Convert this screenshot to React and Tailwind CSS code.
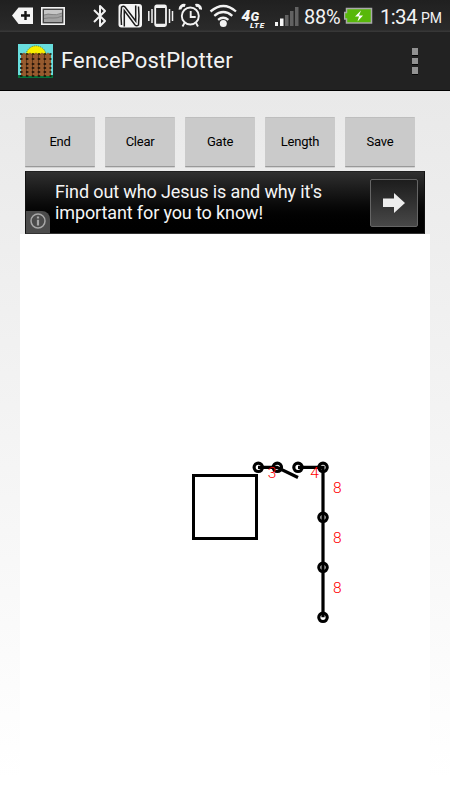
const statusIcon = "block shrink-0";

function StatusBar() {
  return (
    <div className="flex h-8 items-start overflow-hidden bg-gradient-to-b from-[#202020] via-[#2a2a2a] via-[92%] to-[#3a3a3a] pl-3 text-[#f2f2f2]">
      <svg className={statusIcon} width="22" height="32" viewBox="12 0 22 32">
        <path d="M12 15.5 18.5 7.5H33V24H18.5Z" fill="#f5f5f5" />
        <path d="M25.5 11v9M21 15.5h9" stroke="#151515" strokeWidth="2.4" />
      </svg>
      <svg className={`${statusIcon} ml-[7px]`} width="24" height="32" viewBox="41 0 24 32">
        <rect x="41.8" y="7.8" width="22.4" height="16.4" fill="#444" stroke="#f2f2f2" strokeWidth="1.6" />
        <rect x="44" y="10" width="18" height="12" fill="#a2a2a2" />
        <path d="M44 10h18v3q-6 3-10 1.500t-8 .5Z" fill="#c6c6c6" />
        <path d="M44 15q4-1.500 8-.5t10-1.500M44 18.500q5-1 9-.5t9-2" stroke="#777" strokeWidth=".8" fill="none" />
      </svg>
      <svg className={`${statusIcon} ml-7`} width="14" height="32" viewBox="93 0 14 32">
        <path d="m94 10 11 11-5 5V6l5 5L94 22" fill="none" stroke="#f2f2f2" strokeWidth="2" strokeLinejoin="round" />
      </svg>
      <svg className={`${statusIcon} ml-[11px]`} width="24" height="32" viewBox="118 0 24 32">
        <rect x="118.500" y="4" width="23.500" height="23.500" rx="3" fill="#f5f5f5" />
        <path d="M124.300 26.500V10.500L135 25q1.500 1.500 3.500 0 1-8 0-18.500" fill="none" stroke="#1b1b1b" strokeWidth="1.500" />
        <path d="M121.500 25q-1-9 0-18 2-1.500 3.500 0L135.700 21V5.500" fill="none" stroke="#1b1b1b" strokeWidth="1.500" />
      </svg>
      <svg className={`${statusIcon} ml-[6px]`} width="26" height="32" viewBox="148 0 26 32">
        <rect x="155.200" y="5.500" width="10.800" height="20.500" rx="1.500" fill="none" stroke="#f2f2f2" strokeWidth="1.800" />
        <path d="M156 7h9.500M156 24.700h9.500" stroke="#f2f2f2" strokeWidth="1.800" />
        <path d="M152 9v14M148.800 11v10M169.500 9v14M172.500 11v10" stroke="#f2f2f2" strokeWidth="1.500" />
      </svg>
      <svg className={`${statusIcon} ml-[4px]`} width="24" height="32" viewBox="178 0 24 32">
        <circle cx="190.300" cy="16" r="8.500" fill="none" stroke="#f2f2f2" strokeWidth="1.900" />
        <path d="M180.200 9.500a3.800 3.800 0 0 1 5-4M200.500 9.500a3.800 3.800 0 0 0-5-4" stroke="#f2f2f2" strokeWidth="3" fill="none" />
        <path d="M190.700 11v6h5M184.500 23l-2 3.500M196 23l2 3.500" stroke="#f2f2f2" strokeWidth="1.900" fill="none" />
      </svg>
      <svg className={`${statusIcon} ml-[7px]`} width="28" height="32" viewBox="209 0 28 32">
        <path d="M210.500 11.500q13-11 25.500 0M214.300 15.800q9-7.500 18 0M218.100 19.800q5-4 10.300 0" fill="none" stroke="#f2f2f2" strokeWidth="2.300" />
        <circle cx="223.300" cy="23.600" r="3.500" fill="#f2f2f2" />
      </svg>
      <svg className={`${statusIcon} ml-[4px]`} width="27" height="32" viewBox="241 0 27 32" fontFamily="Roboto, sans-serif" fontWeight="900" fontStyle="italic" fill="#f5f5f5">
        <text x="241.500" y="21" fontSize="15.500">
          4<tspan x="250.500" fontSize="13">G</tspan>
        </text>
        <text x="250" y="28" fontSize="8" letterSpacing=".7">LTE</text>
      </svg>
      <svg className={`${statusIcon} ml-[7px]`} width="24" height="32" viewBox="275 0 24 32">
        <path d="M275 22h3v4h-3ZM280 18.500h3.500V26H280Z" fill="#f5f5f5" />
        <path d="M285 15h3.500v11H285ZM290 11h3.500v15H290ZM295 7h3.500v19H295Z" fill="#626262" />
      </svg>
      <span className="ml-[5px] mt-[5px] w-[37px] whitespace-nowrap text-[20px] leading-6 tracking-[-0.300px]">88%</span>
      <svg className={`${statusIcon} ml-[3px]`} width="29" height="32" viewBox="344 0 29 32">
        <path d="M346.500 8.500h25v14.500h-25v-4h-2v-6.500h2Z" fill="#58b80a" stroke="#aaa" strokeWidth="1.500" />
        <path d="m361 10.500-6 6h4l-1.500 5 5.500-6h-4Z" fill="#fff" />
      </svg>
      <span className="ml-[7px] mt-[5px] w-[40px] whitespace-nowrap text-[20.500px] leading-6 tracking-[-0.700px]">1:34</span>
      <span className="ml-px mt-[8px] whitespace-nowrap text-[14px] leading-5">PM</span>
    </div>
  );
}

function FenceLogo() {
  return (
    <svg className="block shrink-0" width="35" height="34" viewBox="0 0 35 34">
      <rect width="35" height="34" fill="#68dede" />
      <circle cx="18" cy="12" r="10.200" fill="#f8f000" stroke="#567e36" strokeDasharray="1 1" />
      <rect y="31" width="35" height="3" fill="#08723b" />
      {[3, 9, 15, 21, 27].map((x) => (
        <path key={x} d={`M${x} 11l3-2.500 3 2.500v21H${x}Z`} fill="#965a2e" />
      ))}
      {[8.5, 14.5, 20.5, 26.5].map((x) => (
        <path key={x} d={`M${x} 11v21`} stroke="#5d361a" />
      ))}
      {[10, 15, 20, 24, 28, 32].map((y) => (
        <path key={y} d={`M2 ${y}h31.500`} stroke="#160c05" strokeWidth="1.500" strokeDasharray="2.500 3.400" />
      ))}
    </svg>
  );
}

function ActionBar() {
  return (
    <header className="flex h-[59px] items-center border-b border-black bg-[#222] pl-[18px] pr-[32px]">
      <div className="pb-px">
        <FenceLogo />
      </div>
      <h1 className="ml-[8px] text-[22px] leading-7 tracking-[0.170px] text-[#f3f3f3]">FencePostPlotter</h1>
      <div className="ml-auto flex flex-col gap-[3px]">
        {[0, 1, 2].map((i) => (
          <span key={i} className="h-[6.500px] w-[6.500px] bg-[#929292] shadow-[0_1px_0_#050505]" />
        ))}
      </div>
    </header>
  );
}

function AdBanner() {
  return (
    <div className="relative mx-[25px] mt-[4px] flex h-[63px] items-start border border-t-[#202020] border-x-[#111] border-b-[#333] bg-gradient-to-b from-[#303030] to-black pl-[29px] pr-[6px]">
      <p className="mt-[9px] whitespace-nowrap text-[18px] leading-[21px] tracking-[-0.120px] text-[#f5f5f5]">
        Find out who Jesus is and why it's<br />important for you to know!
      </p>
      <div className="ml-auto mt-[7px] flex h-[48px] w-[48px] items-center justify-center rounded-[2px] border border-[#656565] bg-gradient-to-b from-[#1d1d1d] to-[#484848]">
        <svg width="24" height="22" viewBox="0 0 24 22"><path d="M1 6.500h11V1l11 10-11 10v-6H1Z" fill="#eee" /></svg>
      </div>
      <div className="absolute bottom-0 left-0 flex h-[22px] w-[24px] items-center justify-center rounded-tr-[8px] bg-[#4b4b4b]">
        <svg width="18" height="18" viewBox="0 0 18 18" fill="none" stroke="#a7a7a7">
          <circle cx="9" cy="8" r="7" strokeWidth="1.500" />
          <path d="M9 3.500v2M9 6.800v5.700" strokeWidth="2.200" />
        </svg>
      </div>
    </div>
  );
}

function PlotCanvas() {
  const posts = [[258.300, 467.300], [277.300, 467.300], [298, 467.300], [323, 467.300], [323, 517.300], [323, 567.300], [323, 617.300]];
  return (
    <svg className="mx-5 block" width="410" height="566" viewBox="20 234 410 566">
      <rect x="20" y="234" width="410" height="566" fill="#fff" />
      <g fill="none" stroke="#000" strokeWidth="3.200">
        <rect x="193.500" y="475.500" width="63" height="63" strokeWidth="3" />
        <path d="M258 467.300h19l21 10.200M298 467.300h25v150" />
        {posts.map(([x, y]) => <circle key={`${x}-${y}`} cx={x} cy={y} r="4.200" />)}
      </g>
      <g fill="#f00" fontFamily="Roboto, sans-serif" fontSize="15.500" fontWeight="300">
        <text x="267.800" y="478">3</text>
        <text x="310.300" y="478">4</text>
        <text x="333" y="493">8</text>
        <text x="333" y="543">8</text>
        <text x="333" y="593">8</text>
      </g>
    </svg>
  );
}

export default function App() {
  return (
    <div className="h-[800px] w-[450px] overflow-hidden bg-white font-['Roboto',sans-serif]">
      <StatusBar />
      <ActionBar />
      <main className="h-[709px] bg-gradient-to-b from-[#e9e9e9] to-white to-[97%] pt-[26px]">
        <div className="mx-[25px] flex h-[50px] gap-[10px]">
          {["End", "Clear", "Gate", "Length", "Save"].map((label) => (
            <button key={label} className="h-[50px] w-[70px] rounded-[1px] border-b border-t border-b-[#999] border-t-[#bebebe] bg-[#cacaca] text-[13px] tracking-[-0.250px] text-black shadow-[0_1px_0_#d2d2d2]">
              {label}
            </button>
          ))}
        </div>
        <AdBanner />
        <PlotCanvas />
      </main>
    </div>
  );
}
